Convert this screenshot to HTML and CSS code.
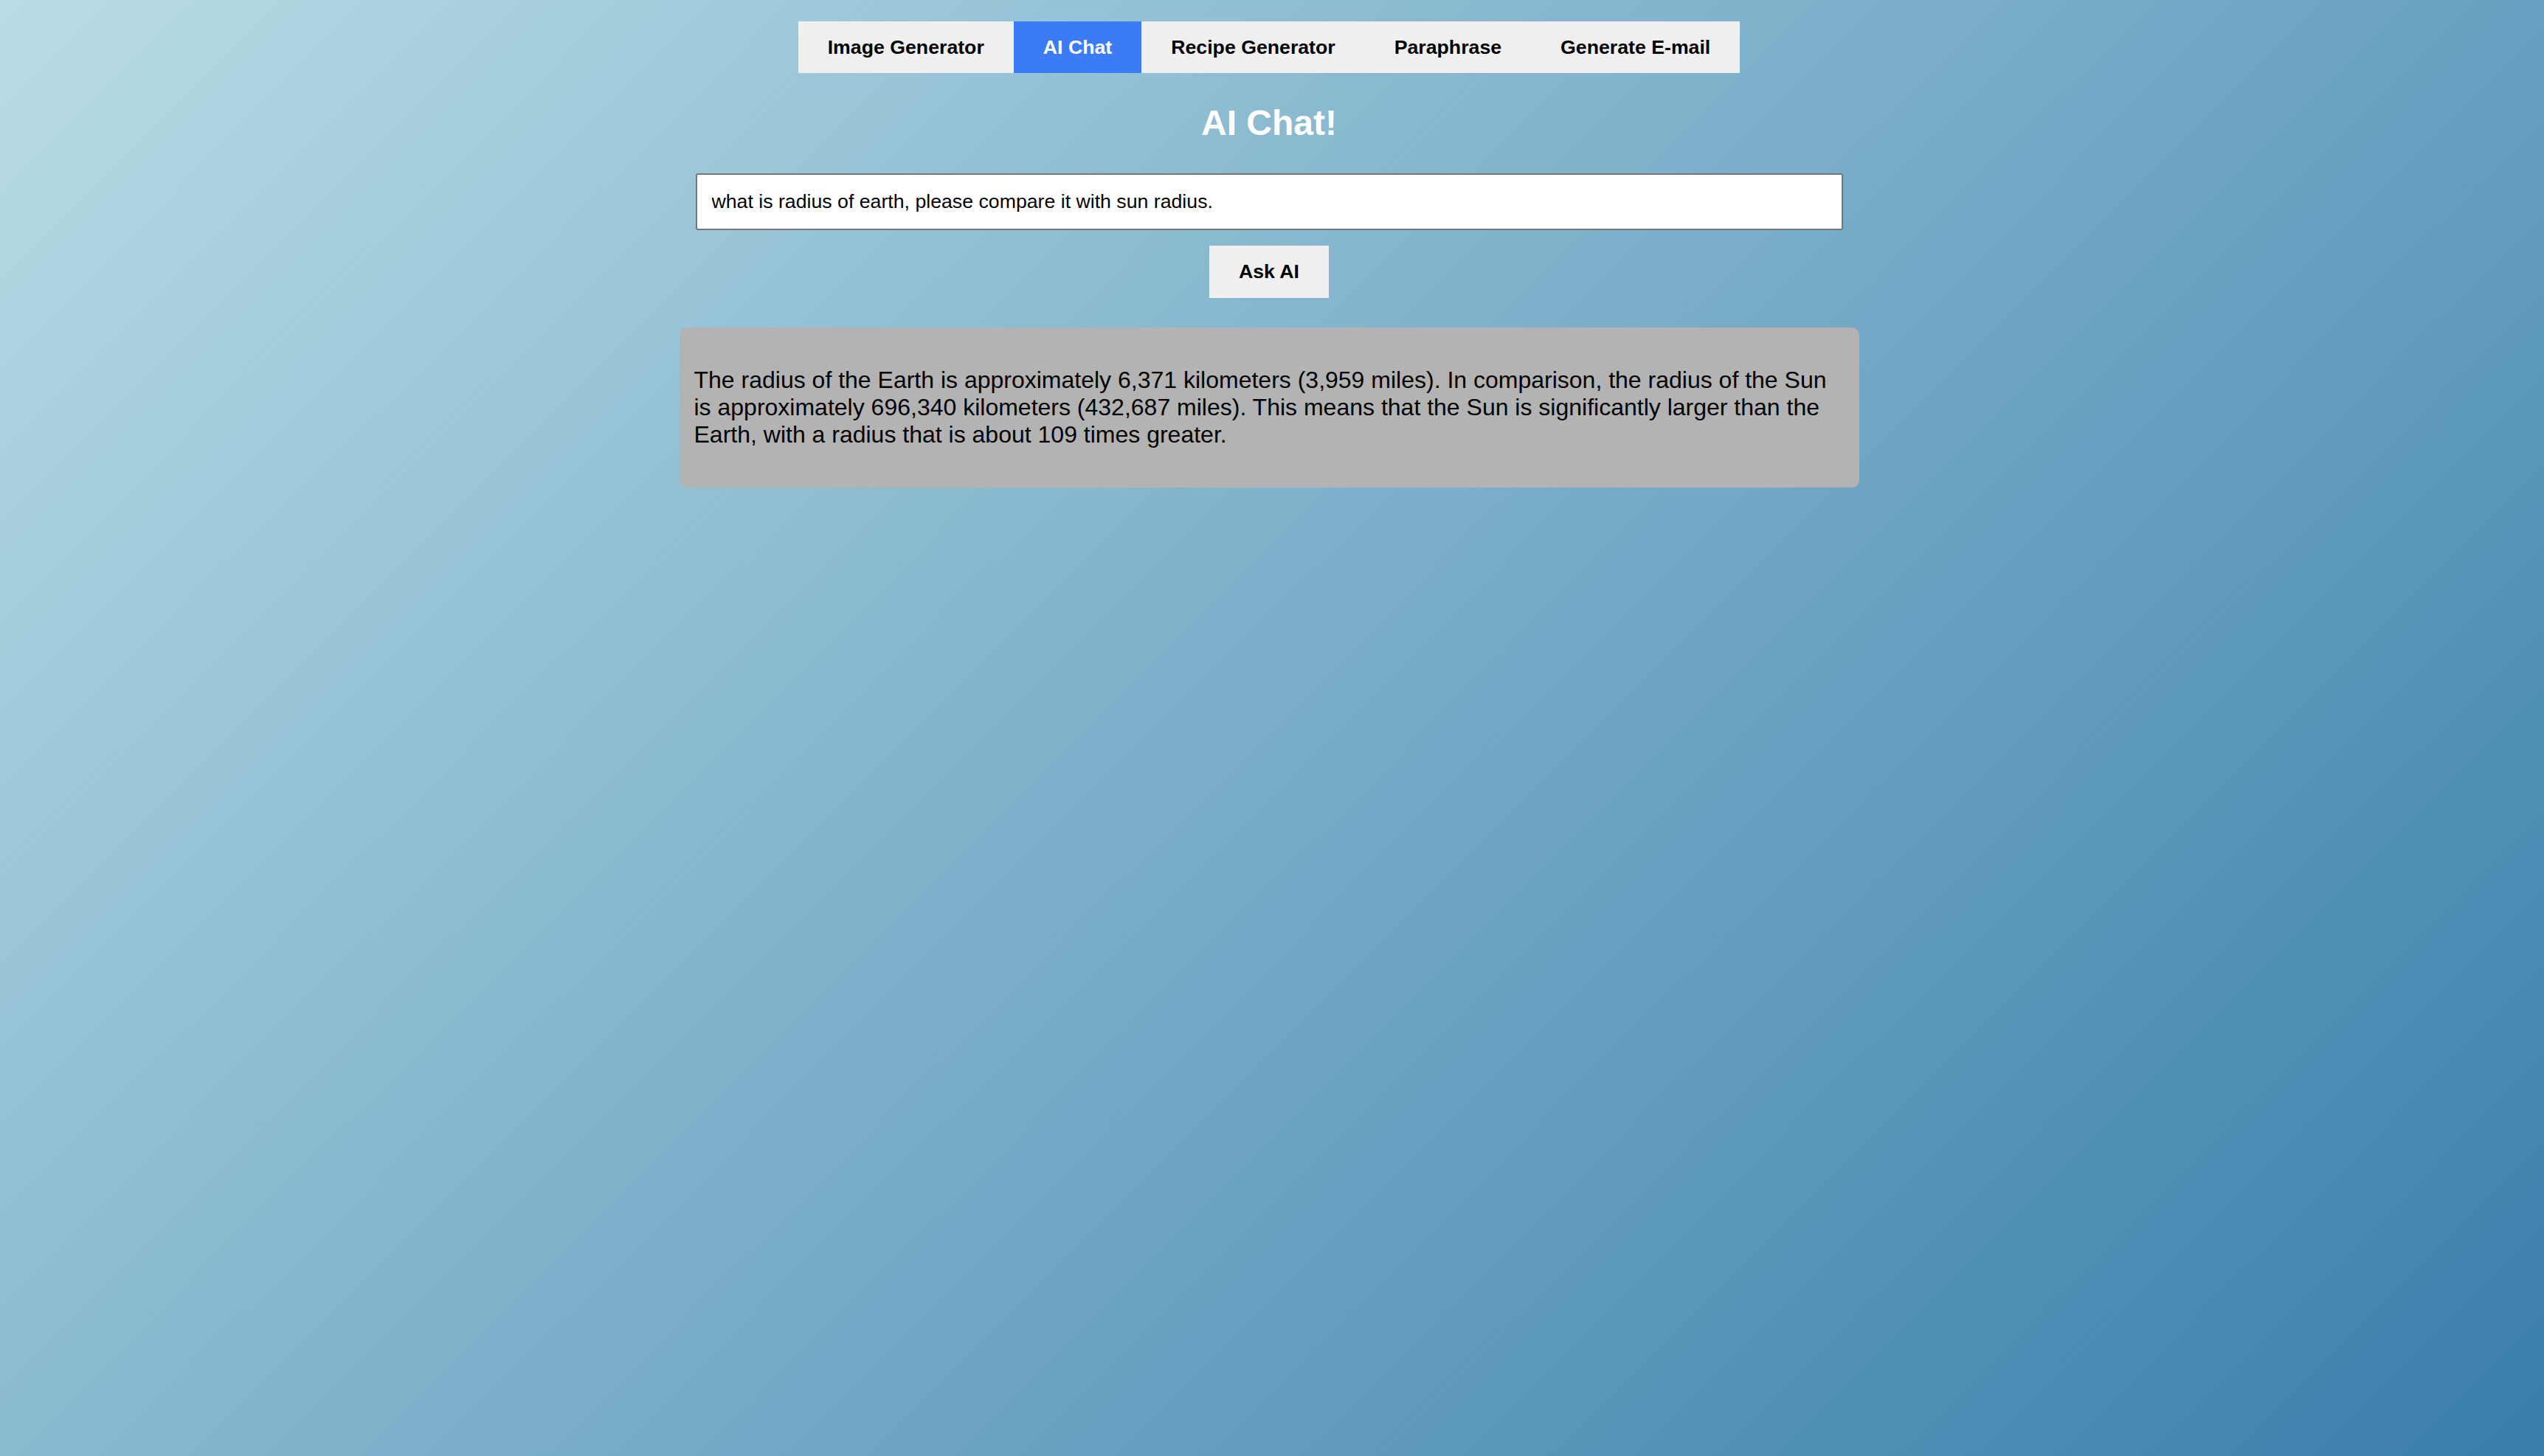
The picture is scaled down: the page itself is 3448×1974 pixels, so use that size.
FILE: index.html
```html
<!DOCTYPE html>
<html lang="en">
<head>
<meta charset="utf-8">
<title>AI Chat!</title>
<link rel="stylesheet" href="styles.css">
</head>
<body>
<div class="page">
  <nav class="tabs">
    <button class="tab">Image Generator</button>
    <button class="tab active">AI Chat</button>
    <button class="tab">Recipe Generator</button>
    <button class="tab">Paraphrase</button>
    <button class="tab">Generate E-mail</button>
  </nav>
  <h1 class="title">AI Chat!</h1>
  <input class="prompt" type="text" value="what is radius of earth, please compare it with sun radius.">
  <button class="ask">Ask AI</button>
  <div class="answer">
    <p>The radius of the Earth is approximately 6,371 kilometers (3,959 miles). In comparison, the radius of the Sun is approximately 696,340 kilometers (432,687 miles). This means that the Sun is significantly larger than the Earth, with a radius that is about 109 times greater.</p>
  </div>
</div>
</body>
</html>
```

FILE: styles.css
```css
html, body {
  margin: 0;
  padding: 0;
  min-height: 100%;
}

body {
  min-height: 100vh;
  background: linear-gradient(135deg, #b8dce5 0%, #397eab 100%);
  font-family: "Liberation Sans", Arial, sans-serif;
  color: #000;
}

.page {
  display: flex;
  flex-direction: column;
  align-items: center;
  padding: 29px 8px 0 0;
}

.tabs {
  display: flex;
  background: #efefef;
}

.tab {
  border: none;
  margin: 0;
  padding: 20px 40px;
  font-family: "Liberation Sans", Arial, sans-serif;
  font-size: 26.7px;
  line-height: 30px;
  font-weight: bold;
  color: #000;
  background: #efefef;
}

.tab.active {
  background: #3b7cf6;
  color: #fff;
}

.title {
  margin: 40px 0 41px;
  font-size: 48px;
  line-height: 55px;
  font-weight: bold;
  color: #fff;
}

.prompt {
  box-sizing: border-box;
  width: 1555px;
  height: 77px;
  margin: 0;
  padding: 0 20px;
  border: 2px solid #767676;
  border-radius: 3px;
  background: #fff;
  font-family: "Liberation Sans", Arial, sans-serif;
  font-size: 26.7px;
  color: #000;
}

.ask {
  margin: 21px 0 0;
  height: 71px;
  padding: 0 40px;
  border: none;
  background: #efefef;
  font-family: "Liberation Sans", Arial, sans-serif;
  font-size: 26.7px;
  font-weight: bold;
  color: #000;
}

.answer {
  box-sizing: border-box;
  width: 1599px;
  margin-top: 40px;
  padding: 20px;
  background: #b3b3b3;
  border-radius: 10px;
}

.answer p {
  margin: 33px 0;
  font-size: 32px;
  line-height: 37px;
}
```
